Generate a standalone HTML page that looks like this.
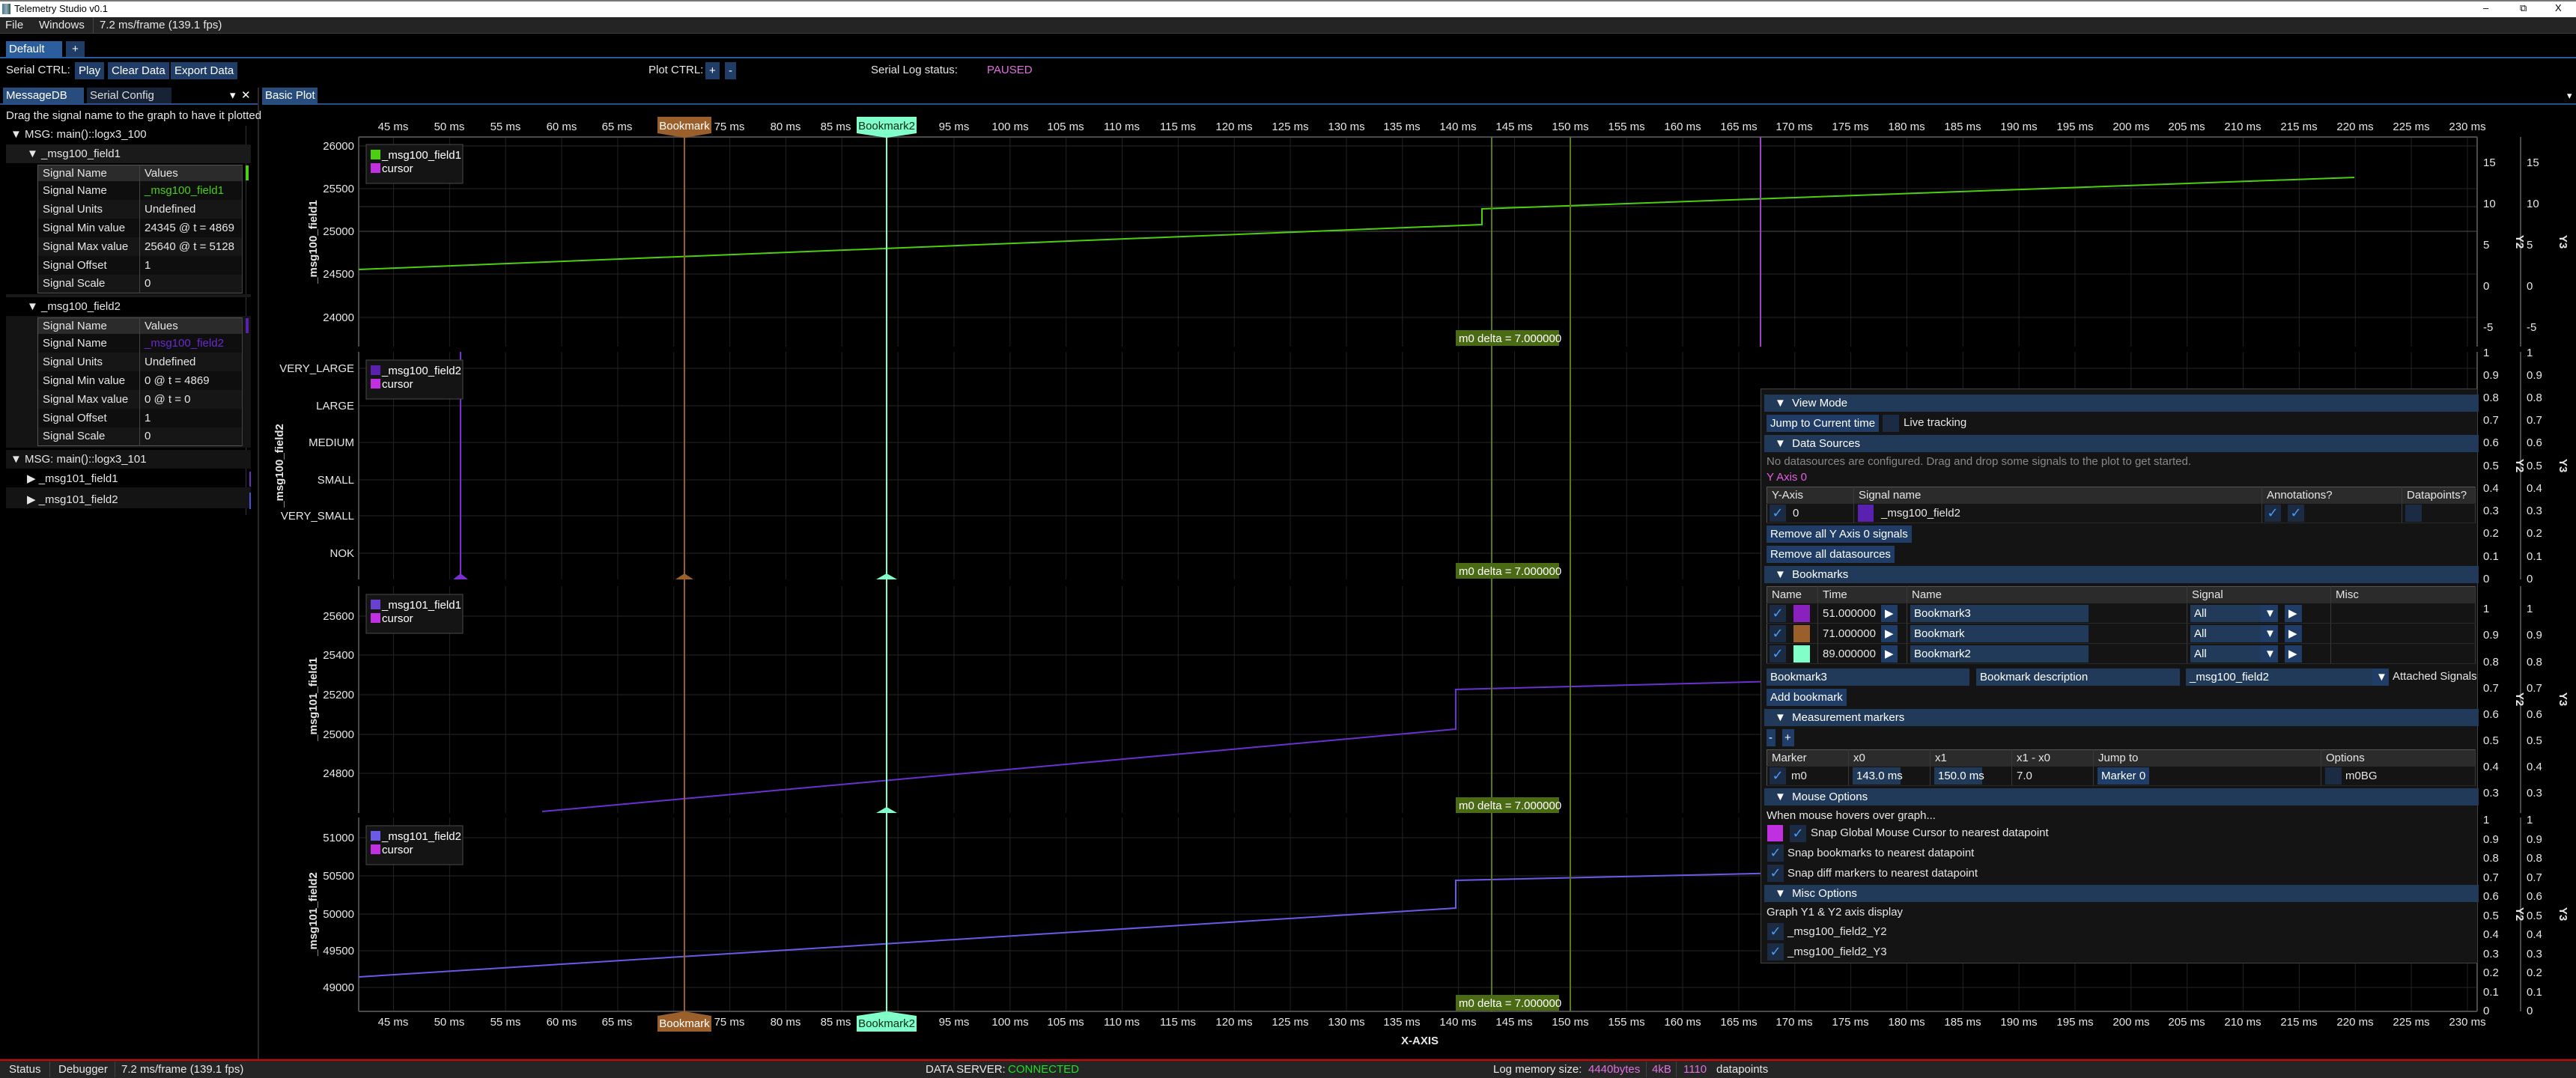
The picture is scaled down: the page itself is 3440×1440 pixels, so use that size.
<!DOCTYPE html>
<html><head><meta charset="utf-8"><style>
*{margin:0;padding:0;box-sizing:border-box}
body{width:3440px;height:1440px;background:#000;overflow:hidden;position:relative;font-family:"Liberation Sans","DejaVu Sans",sans-serif;font-size:15px;color:#e6e6e6}
.a{position:absolute;white-space:nowrap}
.btn{position:absolute;background:#1f3d66;color:#fff;height:23px;line-height:23px;padding:0 5px;white-space:nowrap}
.hdr{position:absolute;left:2356px;width:954px;height:23px;background:#213a5a;line-height:23px;color:#fff;padding-left:14px}
.chk{position:absolute;width:22px;height:23px;background:#1b2b44;color:#4a9af8;font-size:18px;line-height:23px;text-align:center;font-family:"DejaVu Sans",sans-serif}
.inp{position:absolute;background:#213a5a;height:23px;line-height:23px;padding-left:5px;color:#fff}
.t{position:absolute;border:1px solid #555;border-collapse:collapse}
.t td{border-right:1px solid #444;padding-left:6px;height:25px;white-space:nowrap}
.t tr.h td{background:#2b2b2b;height:21px}
.t tr.r1 td{background:#0e0e0e}
.t tr.r2 td{background:#161616}
.ot{position:absolute;border:1px solid #555;border-collapse:collapse;background:#141414}
.ot td{border-right:1px solid #3a3a3a;border-bottom:1px solid #2a2a2a;padding-left:6px;white-space:nowrap;position:relative}
.ot tr.h td{background:#2b2b2b;height:22px}
</style></head><body>

<!-- title bar -->
<div class="a" style="left:0;top:0;width:3440px;height:23px;background:#fff;border-top:2px solid #777"></div>
<div class="a" style="left:3px;top:5px;width:11px;height:14px;background:linear-gradient(90deg,#3a7a8a,#9ab,#2a5a4a)"></div>
<div class="a" style="left:19px;top:4px;color:#000;font-size:13px">Telemetry Studio v0.1</div>
<div class="a" style="left:3316px;top:3px;color:#000;font-size:13px">–</div>
<div class="a" style="left:3365px;top:3px;color:#000;font-size:13px">⧉</div>
<div class="a" style="left:3412px;top:3px;color:#000;font-size:13px">X</div>

<!-- menu bar -->
<div class="a" style="left:0;top:23px;width:3440px;height:22px;background:#242424;border-bottom:1px solid #3c3c3c"></div>
<div class="a" style="left:7px;top:25px">File</div>
<div class="a" style="left:52px;top:25px">Windows</div>
<div class="a" style="left:124px;top:23px;width:1px;height:22px;background:#444"></div>
<div class="a" style="left:133px;top:25px">7.2 ms/frame (139.1 fps)</div>

<!-- tabs -->
<div class="a" style="left:8px;top:55px;width:75px;height:21px;background:#2c5e9e;color:#fff;padding-left:4px;line-height:21px">Default</div>
<div class="a" style="left:88px;top:55px;width:25px;height:21px;background:#1f3d66;color:#fff;text-align:center;line-height:21px">+</div>
<div class="a" style="left:0;top:76px;width:3440px;height:2px;background:#2c5aa0"></div>

<div class="a" style="left:8px;top:85px">Serial CTRL:</div>
<div class="btn" style="left:100px;top:83px">Play</div>
<div class="btn" style="left:144px;top:83px">Clear Data</div>
<div class="btn" style="left:228px;top:83px">Export Data</div>
<div class="a" style="left:866px;top:85px">Plot CTRL:</div>
<div class="btn" style="left:942px;top:83px">+</div>
<div class="btn" style="left:968px;top:83px">-</div>
<div class="a" style="left:1163px;top:85px">Serial Log status:</div>
<div class="a" style="left:1318px;top:85px;color:#e070e0">PAUSED</div>

<!-- panel tabs -->
<div class="a" style="left:4px;top:117px;width:108px;height:21px;background:#284d7c;color:#fff;padding-left:4px;line-height:21px">MessageDB</div>
<div class="a" style="left:116px;top:117px;width:113px;height:21px;background:#172236;color:#ddd;padding-left:4px;line-height:21px">Serial Config</div>
<div class="a" style="left:307px;top:118px;color:#fff">▾</div>
<div class="a" style="left:322px;top:118px;color:#fff">✕</div>
<div class="a" style="left:0;top:138px;width:344px;height:2px;background:#2a4f8a"></div>
<div class="a" style="left:344px;top:117px;width:2px;height:1300px;background:#2a2a2a"></div>
<div class="a" style="left:350px;top:117px;width:74px;height:21px;background:#284d7c;color:#fff;padding-left:4px;line-height:21px">Basic Plot</div>
<div class="a" style="left:350px;top:138px;width:3090px;height:2px;background:#2a4f8a"></div>
<div class="a" style="left:3428px;top:120px;color:#fff;font-size:13px">▾</div>

<!-- left panel -->
<div class="a" style="left:8px;top:146px">Drag the signal name to the graph to have it plotted</div>
<div class="a" style="left:328px;top:168px;width:1px;height:520px;background:#333"></div>
<div class="a" style="left:14px;top:171px">▼ MSG: main()::logx3_100</div>
<div class="a" style="left:8px;top:193px;width:327px;height:25px;background:#1a1a1a"></div>
<div class="a" style="left:36px;top:197px">▼ _msg100_field1</div>
<table class="t" style="left:50px;top:220px;width:274px">
<tr class="h"><td style="width:136px">Signal Name</td><td>Values</td></tr>
<tr class="r1"><td>Signal Name</td><td style="color:#4ad010">_msg100_field1</td></tr>
<tr class="r2"><td>Signal Units</td><td>Undefined</td></tr>
<tr class="r1"><td>Signal Min value</td><td>24345 @ t = 4869</td></tr>
<tr class="r2"><td>Signal Max value</td><td>25640 @ t = 5128</td></tr>
<tr class="r1"><td>Signal Offset</td><td>1</td></tr>
<tr class="r2"><td>Signal Scale</td><td>0</td></tr>
</table>
<div class="a" style="left:328px;top:221px;width:4px;height:20px;background:#4ad010"></div>
<div class="a" style="left:8px;top:393px;width:327px;height:4px;background:#1a1a1a"></div>
<div class="a" style="left:36px;top:401px">▼ _msg100_field2</div>
<div class="a" style="left:8px;top:422px;width:327px;height:176px;background:#141414"></div>
<table class="t" style="left:50px;top:424px;width:274px">
<tr class="h"><td style="width:136px">Signal Name</td><td>Values</td></tr>
<tr class="r1"><td>Signal Name</td><td style="color:#6a2ad0">_msg100_field2</td></tr>
<tr class="r2"><td>Signal Units</td><td>Undefined</td></tr>
<tr class="r1"><td>Signal Min value</td><td>0 @ t = 4869</td></tr>
<tr class="r2"><td>Signal Max value</td><td>0 @ t = 0</td></tr>
<tr class="r1"><td>Signal Offset</td><td>1</td></tr>
<tr class="r2"><td>Signal Scale</td><td>0</td></tr>
</table>
<div class="a" style="left:328px;top:425px;width:4px;height:20px;background:#5a20b0"></div>
<div class="a" style="left:8px;top:601px;width:327px;height:25px;background:#141414"></div>
<div class="a" style="left:14px;top:605px">▼ MSG: main()::logx3_101</div>
<div class="a" style="left:36px;top:630px">▶ _msg101_field1</div>
<div class="a" style="left:8px;top:651px;width:327px;height:28px;background:#141414"></div>
<div class="a" style="left:36px;top:658px">▶ _msg101_field2</div>
<div class="a" style="left:333px;top:630px;width:2px;height:20px;background:#6a30c8"></div>
<div class="a" style="left:333px;top:658px;width:2px;height:22px;background:#4a50d8"></div>

<!-- plots -->
<svg class="a" style="left:0;top:0" width="3440" height="1440" font-family="Liberation Sans, sans-serif" font-size="15">
<defs>
<pattern id="vg" x="525" y="0" width="74.85" height="1440" patternUnits="userSpaceOnUse"><rect x="0" y="0" width="1" height="1440" fill="#222"/></pattern>
</defs>
<g>
<rect x="479" y="183" width="2829" height="280" fill="url(#vg)"/>
<rect x="479" y="470" width="2829" height="304" fill="url(#vg)"/>
<rect x="479" y="783" width="2829" height="303" fill="url(#vg)"/>
<rect x="479" y="1092" width="2829" height="258" fill="url(#vg)"/>
</g>
<g stroke="#262626" stroke-width="1">
<line x1="479" y1="195" x2="3308" y2="195"/><line x1="479" y1="252" x2="3308" y2="252"/><line x1="479" y1="366" x2="3308" y2="366"/><line x1="479" y1="424" x2="3308" y2="424"/>
<line x1="479" y1="492" x2="3308" y2="492"/><line x1="479" y1="542" x2="3308" y2="542"/><line x1="479" y1="591" x2="3308" y2="591"/><line x1="479" y1="641" x2="3308" y2="641"/><line x1="479" y1="689" x2="3308" y2="689"/><line x1="479" y1="739" x2="3308" y2="739"/>
<line x1="479" y1="823" x2="3308" y2="823"/><line x1="479" y1="875" x2="3308" y2="875"/><line x1="479" y1="928" x2="3308" y2="928"/><line x1="479" y1="981" x2="3308" y2="981"/><line x1="479" y1="1033" x2="3308" y2="1033"/>
<line x1="479" y1="1119" x2="3308" y2="1119"/><line x1="479" y1="1170" x2="3308" y2="1170"/><line x1="479" y1="1221" x2="3308" y2="1221"/><line x1="479" y1="1270" x2="3308" y2="1270"/><line x1="479" y1="1319" x2="3308" y2="1319"/>
</g>
<line x1="479" y1="309" x2="3308" y2="309" stroke="#505050"/>
<line x1="479" y1="276" x2="3308" y2="276" stroke="#333"/>
<g stroke="#4a4a4a" stroke-width="2">
<line x1="479" y1="183" x2="3308" y2="183"/>
<line x1="479" y1="183" x2="479" y2="463"/><line x1="479" y1="470" x2="479" y2="774"/><line x1="479" y1="783" x2="479" y2="1086"/><line x1="479" y1="1092" x2="479" y2="1351"/>
<line x1="479" y1="1351" x2="3308" y2="1351"/>
<line x1="3308" y1="183" x2="3308" y2="463"/><line x1="3308" y1="470" x2="3308" y2="774"/><line x1="3308" y1="783" x2="3308" y2="1086"/><line x1="3308" y1="1092" x2="3308" y2="1351"/>
<line x1="3366" y1="183" x2="3366" y2="463"/><line x1="3366" y1="470" x2="3366" y2="774"/><line x1="3366" y1="783" x2="3366" y2="1086"/><line x1="3366" y1="1092" x2="3366" y2="1351"/>
</g>

<!-- data -->
<polyline fill="none" stroke="#4ad010" stroke-width="2" points="479,360 1979,300 1979,279 3144,237"/>
<polyline fill="none" stroke="#6a30d0" stroke-width="2" points="724,1084 1944,974 1944,921 3308,886"/>
<polyline fill="none" stroke="#6a5ae8" stroke-width="2" points="479,1305 1944,1213 1944,1176 3308,1145"/>
<line x1="615" y1="470" x2="615" y2="774" stroke="#7a30d0" stroke-width="2"/>
<line x1="2351" y1="183" x2="2351" y2="463" stroke="#a040c8" stroke-width="2"/>
<g stroke="#5a7a1a" stroke-width="2">
<line x1="1992" y1="183" x2="1992" y2="1351"/><line x1="2097" y1="183" x2="2097" y2="1351"/>
</g>
<line x1="914" y1="183" x2="914" y2="1351" stroke="#9a5f2a" stroke-width="2"/>
<line x1="1184" y1="183" x2="1184" y2="1351" stroke="#80ffc8" stroke-width="2"/>
<g fill="#7a30d0"><path d="M605,774 L615,766 L625,774Z"/></g>
<g fill="#9a5f2a"><path d="M902,774 L914,766 L926,774Z"/></g>
<g fill="#80ffc8"><path d="M1170,774 L1184,766 L1198,774Z M1170,1086 L1184,1078 L1198,1086Z"/></g>

<!-- m0 delta -->
<g font-size="15">
<rect x="1944" y="441" width="138" height="21" fill="#4a6a14"/><text x="1948" y="457" fill="#fff">m0 delta = 7.000000</text>
<rect x="1944" y="752" width="138" height="21" fill="#4a6a14"/><text x="1948" y="768" fill="#fff">m0 delta = 7.000000</text>
<rect x="1944" y="1065" width="138" height="21" fill="#4a6a14"/><text x="1948" y="1081" fill="#fff">m0 delta = 7.000000</text>
<rect x="1944" y="1329" width="138" height="21" fill="#4a6a14"/><text x="1948" y="1345" fill="#fff">m0 delta = 7.000000</text>
</g>

<!-- legends -->
<g>
<rect x="489" y="193" width="129" height="52" fill="#141414" stroke="#4a4a4a"/>
<rect x="495" y="200" width="13" height="13" fill="#4ad010"/><text x="510" y="212" fill="#fff">_msg100_field1</text>
<rect x="495" y="218" width="13" height="13" fill="#c030e0"/><text x="510" y="230" fill="#fff">cursor</text>
<rect x="489" y="481" width="129" height="52" fill="#141414" stroke="#4a4a4a"/>
<rect x="495" y="488" width="13" height="13" fill="#5a20b0"/><text x="510" y="500" fill="#fff">_msg100_field2</text>
<rect x="495" y="506" width="13" height="13" fill="#c030e0"/><text x="510" y="518" fill="#fff">cursor</text>
<rect x="489" y="794" width="129" height="52" fill="#141414" stroke="#4a4a4a"/>
<rect x="495" y="801" width="13" height="13" fill="#6a40d0"/><text x="510" y="813" fill="#fff">_msg101_field1</text>
<rect x="495" y="819" width="13" height="13" fill="#c030e0"/><text x="510" y="831" fill="#fff">cursor</text>
<rect x="489" y="1103" width="129" height="52" fill="#141414" stroke="#4a4a4a"/>
<rect x="495" y="1110" width="13" height="13" fill="#6a5ae8"/><text x="510" y="1122" fill="#fff">_msg101_field2</text>
<rect x="495" y="1128" width="13" height="13" fill="#c030e0"/><text x="510" y="1140" fill="#fff">cursor</text>
</g>

<!-- left y labels -->
<g fill="#e6e6e6" text-anchor="end">
<text x="473" y="200">26000</text><text x="473" y="257">25500</text><text x="473" y="314">25000</text><text x="473" y="371">24500</text><text x="473" y="429">24000</text>
<text x="473" y="497">VERY_LARGE</text><text x="473" y="547">LARGE</text><text x="473" y="596">MEDIUM</text><text x="473" y="646">SMALL</text><text x="473" y="694">VERY_SMALL</text><text x="473" y="744">NOK</text>
<text x="473" y="828">25600</text><text x="473" y="880">25400</text><text x="473" y="933">25200</text><text x="473" y="986">25000</text><text x="473" y="1038">24800</text>
<text x="473" y="1124">51000</text><text x="473" y="1175">50500</text><text x="473" y="1226">50000</text><text x="473" y="1275">49500</text><text x="473" y="1324">49000</text>
</g>
<g fill="#e6e6e6" font-weight="bold" text-anchor="middle">
<text transform="translate(423,323) rotate(-90)">_msg100_field1</text>
<text transform="translate(378,622) rotate(-90)">_msg100_field2</text>
<text transform="translate(423,934) rotate(-90)">_msg101_field1</text>
<text transform="translate(423,1221) rotate(-90)">_msg101_field2</text>
</g>

<!-- right axes -->
<g fill="#e6e6e6">
<text x="3316" y="222">15</text><text x="3316" y="277">10</text><text x="3316" y="332">5</text><text x="3316" y="387">0</text><text x="3316" y="442">-5</text>
<text x="3374" y="222">15</text><text x="3374" y="277">10</text><text x="3374" y="332">5</text><text x="3374" y="387">0</text><text x="3374" y="442">-5</text>
<text x="3316" y="476">1</text><text x="3316" y="506">0.9</text><text x="3316" y="536">0.8</text><text x="3316" y="566">0.7</text><text x="3316" y="596">0.6</text><text x="3316" y="627">0.5</text><text x="3316" y="657">0.4</text><text x="3316" y="687">0.3</text><text x="3316" y="717">0.2</text><text x="3316" y="748">0.1</text><text x="3316" y="778">0</text>
<text x="3374" y="476">1</text><text x="3374" y="506">0.9</text><text x="3374" y="536">0.8</text><text x="3374" y="566">0.7</text><text x="3374" y="596">0.6</text><text x="3374" y="627">0.5</text><text x="3374" y="657">0.4</text><text x="3374" y="687">0.3</text><text x="3374" y="717">0.2</text><text x="3374" y="748">0.1</text><text x="3374" y="778">0</text>
<text x="3316" y="818">1</text><text x="3316" y="853">0.9</text><text x="3316" y="889">0.8</text><text x="3316" y="924">0.7</text><text x="3316" y="959">0.6</text><text x="3316" y="994">0.5</text><text x="3316" y="1029">0.4</text><text x="3316" y="1064">0.3</text>
<text x="3374" y="818">1</text><text x="3374" y="853">0.9</text><text x="3374" y="889">0.8</text><text x="3374" y="924">0.7</text><text x="3374" y="959">0.6</text><text x="3374" y="994">0.5</text><text x="3374" y="1029">0.4</text><text x="3374" y="1064">0.3</text>
<text x="3316" y="1100">1</text><text x="3316" y="1126">0.9</text><text x="3316" y="1151">0.8</text><text x="3316" y="1177">0.7</text><text x="3316" y="1202">0.6</text><text x="3316" y="1228">0.5</text><text x="3316" y="1253">0.4</text><text x="3316" y="1279">0.3</text><text x="3316" y="1304">0.2</text><text x="3316" y="1330">0.1</text><text x="3316" y="1355">0</text>
<text x="3374" y="1100">1</text><text x="3374" y="1126">0.9</text><text x="3374" y="1151">0.8</text><text x="3374" y="1177">0.7</text><text x="3374" y="1202">0.6</text><text x="3374" y="1228">0.5</text><text x="3374" y="1253">0.4</text><text x="3374" y="1279">0.3</text><text x="3374" y="1304">0.2</text><text x="3374" y="1330">0.1</text><text x="3374" y="1355">0</text>
</g>
<g fill="#e6e6e6" font-weight="bold" text-anchor="middle">
<text transform="translate(3360,323) rotate(90)">Y2</text><text transform="translate(3418,323) rotate(90)">Y3</text>
<text transform="translate(3360,622) rotate(90)">Y2</text><text transform="translate(3418,622) rotate(90)">Y3</text>
<text transform="translate(3360,934) rotate(90)">Y2</text><text transform="translate(3418,934) rotate(90)">Y3</text>
<text transform="translate(3360,1221) rotate(90)">Y2</text><text transform="translate(3418,1221) rotate(90)">Y3</text>
</g>

<!-- x labels top & bottom -->
<g fill="#e6e6e6" text-anchor="middle">
<text x="525" y="174">45 ms</text><text x="600" y="174">50 ms</text><text x="675" y="174">55 ms</text><text x="750" y="174">60 ms</text><text x="824" y="174">65 ms</text><text x="974" y="174">75 ms</text><text x="1049" y="174">80 ms</text><text x="1116" y="174">85 ms</text><text x="1274" y="174">95 ms</text><text x="1349" y="174">100 ms</text><text x="1423" y="174">105 ms</text><text x="1498" y="174">110 ms</text><text x="1573" y="174">115 ms</text><text x="1648" y="174">120 ms</text><text x="1723" y="174">125 ms</text><text x="1798" y="174">130 ms</text><text x="1872" y="174">135 ms</text><text x="1947" y="174">140 ms</text><text x="2022" y="174">145 ms</text><text x="2097" y="174">150 ms</text><text x="2172" y="174">155 ms</text><text x="2247" y="174">160 ms</text><text x="2322" y="174">165 ms</text><text x="2396" y="174">170 ms</text><text x="2471" y="174">175 ms</text><text x="2546" y="174">180 ms</text><text x="2621" y="174">185 ms</text><text x="2696" y="174">190 ms</text><text x="2771" y="174">195 ms</text><text x="2846" y="174">200 ms</text><text x="2920" y="174">205 ms</text><text x="2995" y="174">210 ms</text><text x="3070" y="174">215 ms</text><text x="3145" y="174">220 ms</text><text x="3220" y="174">225 ms</text><text x="3295" y="174">230 ms</text>
<text x="525" y="1370">45 ms</text><text x="600" y="1370">50 ms</text><text x="675" y="1370">55 ms</text><text x="750" y="1370">60 ms</text><text x="824" y="1370">65 ms</text><text x="974" y="1370">75 ms</text><text x="1049" y="1370">80 ms</text><text x="1116" y="1370">85 ms</text><text x="1274" y="1370">95 ms</text><text x="1349" y="1370">100 ms</text><text x="1423" y="1370">105 ms</text><text x="1498" y="1370">110 ms</text><text x="1573" y="1370">115 ms</text><text x="1648" y="1370">120 ms</text><text x="1723" y="1370">125 ms</text><text x="1798" y="1370">130 ms</text><text x="1872" y="1370">135 ms</text><text x="1947" y="1370">140 ms</text><text x="2022" y="1370">145 ms</text><text x="2097" y="1370">150 ms</text><text x="2172" y="1370">155 ms</text><text x="2247" y="1370">160 ms</text><text x="2322" y="1370">165 ms</text><text x="2396" y="1370">170 ms</text><text x="2471" y="1370">175 ms</text><text x="2546" y="1370">180 ms</text><text x="2621" y="1370">185 ms</text><text x="2696" y="1370">190 ms</text><text x="2771" y="1370">195 ms</text><text x="2846" y="1370">200 ms</text><text x="2920" y="1370">205 ms</text><text x="2995" y="1370">210 ms</text><text x="3070" y="1370">215 ms</text><text x="3145" y="1370">220 ms</text><text x="3220" y="1370">225 ms</text><text x="3295" y="1370">230 ms</text>
<text x="1896" y="1395" font-weight="bold">X-AXIS</text>
</g>

<!-- bookmark flags -->
<path d="M878,156 H950 V178 L914,184 L878,178Z" fill="#9a5f2a"/>
<text x="914" y="173" fill="#fff" text-anchor="middle">Bookmark</text>
<path d="M1144,156 H1224 V178 L1184,184 L1144,178Z" fill="#80ffc8"/>
<text x="1184" y="173" fill="#0a2a1a" text-anchor="middle">Bookmark2</text>
<path d="M878,1378 H950 V1357 L914,1351 L878,1357Z" fill="#9a5f2a"/>
<text x="914" y="1372" fill="#fff" text-anchor="middle">Bookmark</text>
<path d="M1144,1378 H1224 V1357 L1184,1351 L1144,1357Z" fill="#80ffc8"/>
<text x="1184" y="1372" fill="#0a2a1a" text-anchor="middle">Bookmark2</text>
</svg>

<!-- overlay panel -->
<div class="a" style="left:2351px;top:519px;width:958px;height:768px;background:#141414;border:1px solid #444"></div>
<div class="hdr" style="top:527px">▼&nbsp;&nbsp;View Mode</div>
<div class="btn" style="left:2359px;top:554px">Jump to Current time</div>
<div class="chk" style="left:2514px;top:554px"></div>
<div class="a" style="left:2542px;top:556px">Live tracking</div>
<div class="hdr" style="top:581px">▼&nbsp;&nbsp;Data Sources</div>
<div class="a" style="left:2359px;top:608px;color:#888">No datasources are configured. Drag and drop some signals to the plot to get started.</div>
<div class="a" style="left:2359px;top:629px;color:#e060e0">Y Axis 0</div>
<table class="ot" style="left:2359px;top:650px;width:947px">
<tr class="h"><td style="width:116px">Y-Axis</td><td style="width:545px">Signal name</td><td style="width:187px">Annotations?</td><td>Datapoints?</td></tr>
<tr style="height:26px"><td><span class="chk" style="left:3px;top:1px">✓</span><span style="margin-left:28px">0</span></td><td><span class="a" style="left:5px;top:1px;width:21px;height:23px;background:#5a20b0"></span><span style="margin-left:30px">_msg100_field2</span></td><td><span class="chk" style="left:3px;top:1px">✓</span><span class="chk" style="left:34px;top:1px">✓</span></td><td><span class="chk" style="left:4px;top:1px"></span></td></tr>
</table>
<div class="btn" style="left:2359px;top:702px">Remove all Y Axis 0 signals</div>
<div class="btn" style="left:2359px;top:729px">Remove all datasources</div>
<div class="hdr" style="top:756px">▼&nbsp;&nbsp;Bookmarks</div>
<table class="ot" style="left:2359px;top:783px;width:947px">
<tr class="h"><td style="width:68px">Name</td><td style="width:119px">Time</td><td style="width:374px">Name</td><td style="width:192px">Signal</td><td>Misc</td></tr>
<tr style="height:27px"><td><span class="chk" style="left:3px;top:2px">✓</span><span class="a" style="left:35px;top:2px;width:22px;height:23px;background:#8a20c0"></span></td><td>51.000000<span class="btn" style="left:84px;top:2px;width:22px">▶</span></td><td><span class="inp" style="left:4px;top:2px;width:238px">Bookmark3</span></td><td><span class="inp" style="left:4px;top:2px;width:94px">All</span><span class="btn" style="left:98px;top:2px;width:23px">▼</span><span class="btn" style="left:130px;top:2px;width:23px">▶</span></td><td></td></tr>
<tr style="height:27px"><td><span class="chk" style="left:3px;top:2px">✓</span><span class="a" style="left:35px;top:2px;width:22px;height:23px;background:#9a5f2a"></span></td><td>71.000000<span class="btn" style="left:84px;top:2px;width:22px">▶</span></td><td><span class="inp" style="left:4px;top:2px;width:238px">Bookmark</span></td><td><span class="inp" style="left:4px;top:2px;width:94px">All</span><span class="btn" style="left:98px;top:2px;width:23px">▼</span><span class="btn" style="left:130px;top:2px;width:23px">▶</span></td><td></td></tr>
<tr style="height:27px"><td><span class="chk" style="left:3px;top:2px">✓</span><span class="a" style="left:35px;top:2px;width:22px;height:23px;background:#80ffc8"></span></td><td>89.000000<span class="btn" style="left:84px;top:2px;width:22px">▶</span></td><td><span class="inp" style="left:4px;top:2px;width:238px">Bookmark2</span></td><td><span class="inp" style="left:4px;top:2px;width:94px">All</span><span class="btn" style="left:98px;top:2px;width:23px">▼</span><span class="btn" style="left:130px;top:2px;width:23px">▶</span></td><td></td></tr>
</table>
<div class="inp" style="left:2359px;top:893px;width:271px">Bookmark3</div>
<div class="inp" style="left:2639px;top:893px;width:272px">Bookmark description</div>
<div class="inp" style="left:2919px;top:893px;width:250px">_msg100_field2</div>
<div class="btn" style="left:3168px;top:893px;width:22px">▼</div>
<div class="a" style="left:3195px;top:895px">Attached Signals</div>
<div class="btn" style="left:2359px;top:920px">Add bookmark</div>
<div class="hdr" style="top:947px">▼&nbsp;&nbsp;Measurement markers</div>
<div class="btn" style="left:2359px;top:974px;width:12px;padding:0 3px">-</div>
<div class="btn" style="left:2380px;top:974px;width:16px;padding:0 3px">+</div>
<table class="ot" style="left:2359px;top:1001px;width:947px">
<tr class="h"><td style="width:109px">Marker</td><td style="width:109px">x0</td><td style="width:109px">x1</td><td style="width:109px">x1 - x0</td><td style="width:304px">Jump to</td><td>Options</td></tr>
<tr style="height:26px"><td><span class="chk" style="left:3px;top:1px">✓</span><span style="margin-left:26px">m0</span></td><td><span class="inp" style="left:5px;top:1px;width:64px">143.0 ms</span></td><td><span class="inp" style="left:5px;top:1px;width:64px">150.0 ms</span></td><td>7.0</td><td><span class="btn" style="left:5px;top:1px">Marker 0</span></td><td><span class="chk" style="left:5px;top:1px"></span><span style="margin-left:26px">m0BG</span></td></tr>
</table>
<div class="hdr" style="top:1053px">▼&nbsp;&nbsp;Mouse Options</div>
<div class="a" style="left:2359px;top:1081px">When mouse hovers over graph...</div>
<div class="a" style="left:2360px;top:1102px;width:21px;height:22px;background:#c030e0"></div>
<div class="chk" style="left:2390px;top:1102px">✓</div>
<div class="a" style="left:2418px;top:1104px">Snap Global Mouse Cursor to nearest datapoint</div>
<div class="chk" style="left:2360px;top:1128px">✓</div>
<div class="a" style="left:2387px;top:1131px">Snap bookmarks to nearest datapoint</div>
<div class="chk" style="left:2360px;top:1155px">✓</div>
<div class="a" style="left:2387px;top:1158px">Snap diff markers to nearest datapoint</div>
<div class="hdr" style="top:1182px">▼&nbsp;&nbsp;Misc Options</div>
<div class="a" style="left:2359px;top:1210px">Graph Y1 &amp; Y2 axis display</div>
<div class="chk" style="left:2360px;top:1233px">✓</div>
<div class="a" style="left:2387px;top:1236px">_msg100_field2_Y2</div>
<div class="chk" style="left:2360px;top:1260px">✓</div>
<div class="a" style="left:2387px;top:1263px">_msg100_field2_Y3</div>

<!-- status bar -->
<div class="a" style="left:0;top:1415px;width:3440px;height:2px;background:#e00000"></div>
<div class="a" style="left:0;top:1417px;width:3440px;height:23px;background:#252525"></div>
<div class="a" style="left:12px;top:1420px">Status</div>
<div class="a" style="left:66px;top:1418px;width:1px;height:21px;background:#444"></div>
<div class="a" style="left:78px;top:1420px">Debugger</div>
<div class="a" style="left:153px;top:1418px;width:1px;height:21px;background:#444"></div>
<div class="a" style="left:162px;top:1420px">7.2 ms/frame (139.1 fps)</div>
<div class="a" style="left:1236px;top:1420px">DATA SERVER:</div>
<div class="a" style="left:1346px;top:1420px;color:#22dd22">CONNECTED</div>
<div class="a" style="left:1994px;top:1420px">Log memory size:</div>
<div class="a" style="left:2121px;top:1420px;color:#e070e0">4440bytes</div>
<div class="a" style="left:2198px;top:1418px;width:1px;height:21px;background:#444"></div>
<div class="a" style="left:2206px;top:1420px;color:#e070e0">4kB</div>
<div class="a" style="left:2238px;top:1418px;width:1px;height:21px;background:#444"></div>
<div class="a" style="left:2248px;top:1420px;color:#e070e0">1110</div>
<div class="a" style="left:2292px;top:1420px">datapoints</div>
</body></html>
